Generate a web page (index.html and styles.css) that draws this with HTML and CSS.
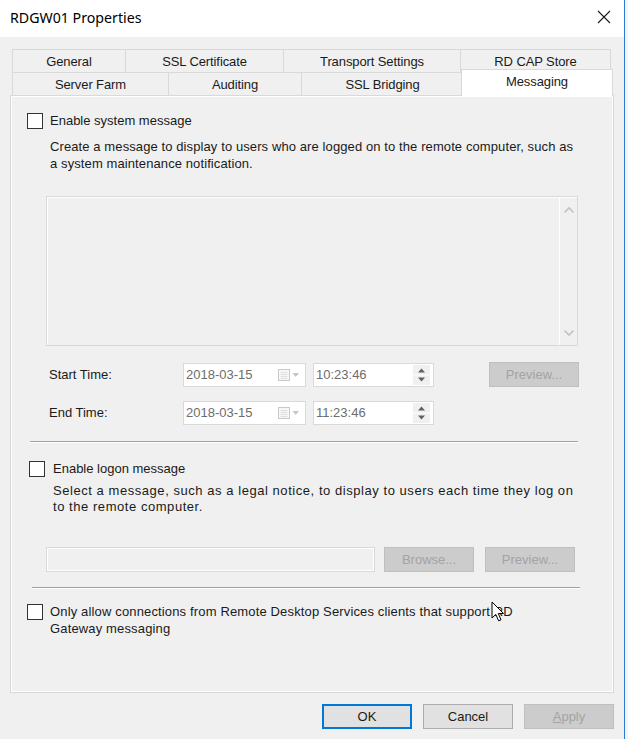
FILE: index.html
```html
<!DOCTYPE html>
<html>
<head>
<meta charset="utf-8">
<link rel="stylesheet" href="styles.css">
</head>
<body>
<div class="screen">
  <div class="window">
    <div class="titlebar">
      <span class="title">RDGW01 Properties</span>
      <svg class="close" width="14" height="14" viewBox="0 0 14 14"><path d="M1 1 L13 13 M13 1 L1 13" stroke="#1a1a1a" stroke-width="1.1" fill="none"/></svg>
    </div>
    <div class="body">
      <div class="tabs">
        <div class="tabrow row1">
          <div class="tab w-general">General</div>
          <div class="tab w-ssl">SSL Certificate</div>
          <div class="tab w-transport">Transport Settings</div>
          <div class="tab w-cap">RD CAP Store</div>
        </div>
        <div class="tabrow row2">
          <div class="tab w-farm">Server Farm</div>
          <div class="tab w-audit">Auditing</div>
          <div class="tab w-bridge">SSL Bridging</div>
          <div class="tab w-msg active">Messaging</div>
        </div>
      </div>
      <div class="panel">
        <div class="check-row first">
          <span class="checkbox"></span>
          <span class="check-label">Enable system message</span>
        </div>
        <p class="desc sys-desc">Create a message to display to users who are logged on to the remote computer, such as<br>a system maintenance notification.</p>
        <div class="textarea">
          <div class="scroll">
            <svg width="12" height="8" viewBox="0 0 12 8"><path d="M1.5 6.5 L6 2 L10.5 6.5" stroke="#c2c2c2" stroke-width="1.6" fill="none"/></svg>
            <svg width="12" height="8" viewBox="0 0 12 8"><path d="M1.5 1.5 L6 6 L10.5 1.5" stroke="#c2c2c2" stroke-width="1.6" fill="none"/></svg>
          </div>
        </div>
        <div class="time-row start">
          <span class="time-label">Start Time:</span>
          <div class="datebox">
            <span class="val">2018-03-15</span>
            <span class="cal-icon"><svg width="24" height="14" viewBox="0 0 24 14"><rect x="1.5" y="1.5" width="11" height="11" fill="#f7f7f7" stroke="#c9c9c9"/><path d="M3.5 4.5h7M3.5 6.5h7M3.5 8.5h7M3.5 10.5h7" stroke="#dedede"/><path d="M15.5 5 L22 5 L18.75 9 Z" fill="#c6c6c6"/></svg></span>
          </div>
          <div class="timebox">
            <span class="val">10:23:46</span>
            <span class="spin"><svg width="17" height="20" viewBox="0 0 17 20"><rect x="0" y="0" width="17" height="20" fill="#f0f0f0"/><path d="M0 10h17" stroke="#fff"/><path d="M5 7.5 L8.5 3.5 L12 7.5 Z M5 12.5 L8.5 16.5 L12 12.5 Z" fill="#606060"/></svg></span>
          </div>
          <button class="btn disabled preview1">Preview...</button>
        </div>
        <div class="time-row end">
          <span class="time-label">End Time:</span>
          <div class="datebox">
            <span class="val">2018-03-15</span>
            <span class="cal-icon"><svg width="24" height="14" viewBox="0 0 24 14"><rect x="1.5" y="1.5" width="11" height="11" fill="#f7f7f7" stroke="#c9c9c9"/><path d="M3.5 4.5h7M3.5 6.5h7M3.5 8.5h7M3.5 10.5h7" stroke="#dedede"/><path d="M15.5 5 L22 5 L18.75 9 Z" fill="#c6c6c6"/></svg></span>
          </div>
          <div class="timebox">
            <span class="val">11:23:46</span>
            <span class="spin"><svg width="17" height="20" viewBox="0 0 17 20"><rect x="0" y="0" width="17" height="20" fill="#f0f0f0"/><path d="M0 10h17" stroke="#fff"/><path d="M5 7.5 L8.5 3.5 L12 7.5 Z M5 12.5 L8.5 16.5 L12 12.5 Z" fill="#606060"/></svg></span>
          </div>
        </div>
        <div class="sep sep1"></div>
        <div class="check-row logon">
          <span class="checkbox"></span>
          <span class="check-label">Enable logon message</span>
        </div>
        <p class="desc logon-desc">Select a message, such as a legal notice, to display to users each time they log on<br>to the remote computer.</p>
        <div class="file-row">
          <div class="fileinput"></div>
          <button class="btn disabled browse">Browse...</button>
          <button class="btn disabled preview2">Preview...</button>
        </div>
        <div class="sep sep2"></div>
        <div class="check-row only">
          <span class="checkbox"></span>
          <span class="check-label">Only allow connections from Remote Desktop Services clients that support RD<br>Gateway messaging</span>
        </div>
      </div>
      <div class="footer">
        <button class="btn ok">OK</button>
        <button class="btn cancel">Cancel</button>
        <button class="btn disabled apply"><u>A</u>pply</button>
      </div>
    </div>
  </div>
  <div class="edge"></div>
  <svg class="cursor" width="14" height="22" viewBox="0 0 14 22"><path d="M1 1 L1 17 L4.8 13.4 L7.6 19.8 L10 18.8 L7.3 12.5 L12.5 12.5 Z" fill="#fff" stroke="#000" stroke-width="1" stroke-linejoin="round"/></svg>
</div>
</body>
</html>
```

FILE: styles.css
```css
* { box-sizing: border-box; }
html, body { margin: 0; padding: 0; }
body {
  width: 628px;
  height: 739px;
  overflow: hidden;
  background: #f0f0f0;
  font-family: "Liberation Sans", Arial, sans-serif;
  font-size: 13px;
  color: #1a1a1a;
}
.screen {
  position: relative;
  display: flex;
  width: 628px;
  height: 739px;
}
.window {
  width: 624px;
  height: 739px;
  display: flex;
  flex-direction: column;
  background: #f0f0f0;
}
.edge {
  width: 4px;
  height: 739px;
  border-left: 1px solid #2b79d0;
  background: #f4f4f4;
}
.titlebar {
  height: 37px;
  background: #fff;
  display: flex;
  align-items: center;
  justify-content: space-between;
  padding: 0 13px 0 10px;
}
.title {
  font-family: "Noto Sans", "Liberation Sans", sans-serif;
  font-size: 14.2px;
  color: #000;
  margin-top: -2px;
}
.close { margin-top: -3px; }
.body {
  flex: 1;
  display: flex;
  flex-direction: column;
  padding: 12px 10px 0 10px;
}
.tabs {
  display: flex;
  flex-direction: column;
  padding-left: 2px;
  height: 46px;
}
.tabrow {
  display: flex;
  height: 23px;
}
.tab {
  border: 1px solid #d9d9d9;
  border-bottom: none;
  margin-right: -1px;
  background: #f0f0f0;
  display: flex;
  align-items: center;
  justify-content: center;
  font-size: 13px;
  letter-spacing: -0.1px;
  color: #1a1a1a;
  padding-top: 1px;
}
.w-general { width: 114px; }
.w-ssl { width: 159px; }
.w-transport { width: 178px; }
.w-cap { width: 151px; }
.w-farm { width: 157px; }
.w-audit { width: 134px; }
.w-bridge { width: 163px; }
.w-msg { width: 150px; }
.tab.active {
  background: #fff;
  height: 27px;
  margin-top: -3px;
  margin-left: -2px;
  width: 152px;
  position: relative;
  z-index: 2;
  padding-top: 0;
  padding-bottom: 4px;
  border-color: #d9d9d9;
}
.panel {
  height: 598px;
  width: 604px;
  border: 1px solid #d9d9d9;
  box-shadow: inset 1px 1px 0 #fff, inset -1px -1px 0 #fff;
  background: #f0f0f0;
  display: flex;
  flex-direction: column;
  padding: 0 0 0 16px;
  position: relative;
  z-index: 1;
}
.check-row {
  display: flex;
  align-items: flex-start;
  gap: 7px;
  line-height: 17px;
}
.checkbox {
  width: 16px;
  height: 16px;
  border: 1px solid #333;
  background: #fff;
  flex: none;
}
.check-label { margin-top: -1px; }
.first { margin-top: 17px; }
.desc {
  margin: 0;
  line-height: 17px;
}
.sys-desc { margin: 9px 0 0 23px; letter-spacing: 0.1px; }
.textarea {
  margin: 24px 0 0 19px;
  width: 532px;
  height: 150px;
  border: 1px solid #d9d9d9;
  box-shadow: inset 1px 1px 0 #fff;
  background: #f0f0f0;
  display: flex;
  justify-content: flex-end;
}
.scroll {
  width: 18px;
  border-left: 1px solid #fff;
  display: flex;
  flex-direction: column;
  justify-content: space-between;
  align-items: center;
  padding: 9px 0 8px 0;
}
.time-row {
  display: flex;
  align-items: center;
  height: 25px;
}
.start { margin-top: 16px; }
.end { margin-top: 13px; }
.time-label {
  width: 156px;
  padding-left: 22px;
}
.datebox {
  width: 123px;
  height: 24px;
  border: 1px solid #d9d9d9;
  background: #fff;
  display: flex;
  align-items: center;
  justify-content: space-between;
  padding: 0 4px 0 2px;
  color: #6d6d6d;
}
.timebox {
  margin-left: 7px;
  width: 121px;
  height: 24px;
  border: 1px solid #d9d9d9;
  background: #fff;
  display: flex;
  align-items: center;
  justify-content: space-between;
  padding: 0 3px 0 2px;
  color: #6d6d6d;
}
.cal-icon, .spin { display: flex; }
.btn {
  font-family: "Liberation Sans", Arial, sans-serif;
  font-size: 13px;
  height: 25px;
  width: 90px;
  padding: 0;
  background: #e1e1e1;
  border: 1px solid #adadad;
  color: #1a1a1a;
}
.btn.disabled {
  background: #cccccc;
  border-color: #bfbfbf;
  color: #a3a3a3;
}
.preview1 { margin-left: 55px; margin-top: -1px; }
.sep {
  height: 2px;
  border-top: 1px solid #a0a0a0;
  border-bottom: 1px solid #fff;
}
.sep1 { margin: 16px 0 0 3px; width: 548px; }
.logon { margin: 18px 0 0 2px; }
.logon .check-label { margin-left: 1px; }
.logon-desc { margin: 6px 0 0 26px; line-height: 16px; letter-spacing: 0.55px; }
.file-row {
  display: flex;
  align-items: center;
  margin: 32px 0 0 19px;
}
.fileinput {
  width: 329px;
  height: 25px;
  border: 1px solid #d9d9d9;
  box-shadow: inset 1px 1px 0 #fff, inset -1px -1px 0 #fff;
  background: #f0f0f0;
}
.browse { margin-left: 9px; }
.preview2 { margin-left: 11px; }
.sep2 { margin: 15px 0 0 5px; width: 548px; }
.only { margin-top: 15px; }
.only .check-label { letter-spacing: 0.15px; }
.footer {
  display: flex;
  justify-content: flex-end;
  gap: 11px;
  padding: 11px 0 0 0;
}
.btn.ok {
  border: 1px solid #0078d7;
  box-shadow: inset 0 0 0 1px #0078d7;
}
.cursor {
  position: absolute;
  left: 491px;
  top: 601px;
  z-index: 5;
}
```
